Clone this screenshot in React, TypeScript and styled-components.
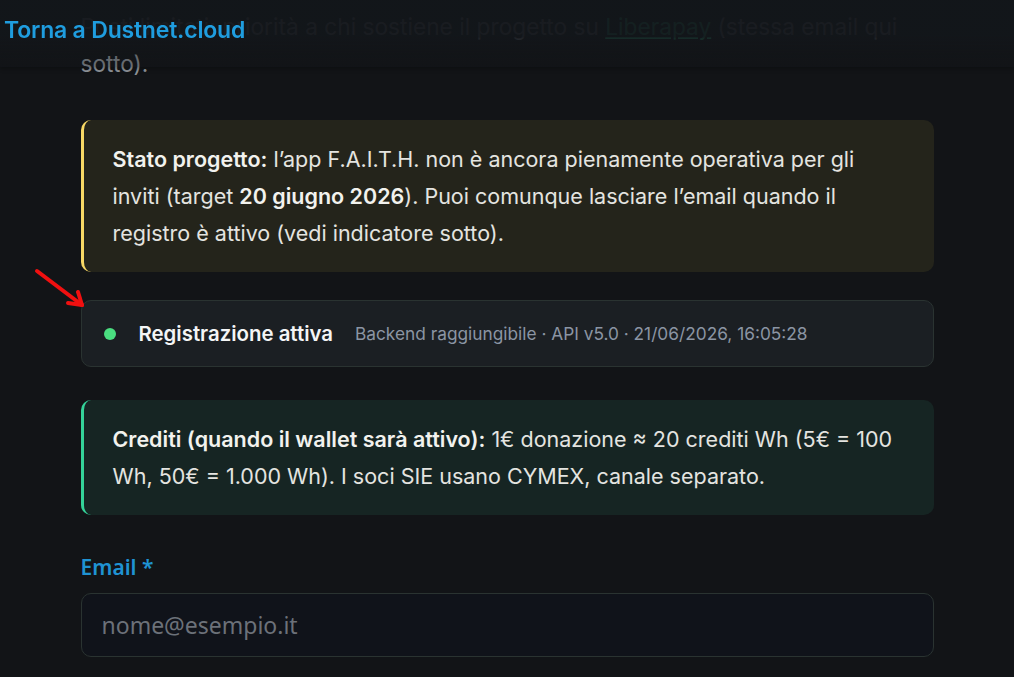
import styled, { createGlobalStyle } from "styled-components";

const GlobalStyle = createGlobalStyle`
  html, body {
    margin: 0;
    padding: 0;
    background: #121417;
    color: #e6e8ea;
    font-family: Inter, "Noto Sans", sans-serif;
  }
  * { box-sizing: border-box; }
`;

const TopBar = styled.header`
  position: fixed;
  top: 0;
  left: 0;
  right: 0;
  height: 67px;
  z-index: 10;
  display: flex;
  align-items: center;
  padding: 0 0 8px 4px;
  background: linear-gradient(
    to bottom,
    rgba(19, 22, 26, 0.95) 0%,
    rgba(19, 22, 26, 0.95) 55%,
    rgba(19, 22, 26, 0.35) 82%,
    rgba(19, 22, 26, 0.3) 100%
  );
  box-shadow: 0 2px 4px rgba(0, 0, 0, 0.25);
`;

const BackLink = styled.a`
  color: #1f9ddf;
  font-size: 23px;
  font-weight: 600;
  letter-spacing: -0.2px;
  text-decoration: none;
`;

const Main = styled.main`
  width: 853px;
  margin: 0 auto;
  padding-top: 8px;
  display: flex;
  flex-direction: column;
`;

const Intro = styled.p`
  margin: 0 0 38px;
  font-size: 22.7px;
  line-height: 37px;
  color: #8d9298;
`;

const Link = styled.a`
  color: #34d399;
  text-decoration: underline;
`;

const Notice = styled.div<{ $accent: string; $bg: string }>`
  background: ${(p) => p.$bg};
  border-left: 3px solid ${(p) => p.$accent};
  border-radius: 10px;
  padding: 21px 32px 20px 29px;
  font-size: 21.5px;
  line-height: 37px;
  color: #e4e4e0;

  b {
    font-weight: 600;
    color: #f2f2ee;
  }
`;

const StatusCard = styled.div`
  margin: 28px 0 33px;
  height: 67px;
  display: flex;
  align-items: center;
  padding: 0 22px;
  background: #1b1f23;
  border: 1px solid #2a3331;
  border-radius: 10px;
`;

const Dot = styled.span`
  width: 12px;
  height: 12px;
  border-radius: 50%;
  background: #4ade80;
  flex: none;
  margin-right: 23px;
`;

const StatusTitle = styled.span`
  font-size: 20.4px;
  font-weight: 600;
  color: #f4f5f6;
  margin-right: 22px;
`;

const StatusMeta = styled.span`
  font-size: 17.3px;
  color: #8b95a3;
`;

const Field = styled.div`
  margin-top: 38px;
  display: flex;
  flex-direction: column;
  gap: 12px;
`;

const Label = styled.label`
  font-family: "Noto Sans", "Open Sans", sans-serif;
  font-size: 21px;
  font-weight: 600;
  color: #1f93d3;
`;

const Input = styled.input`
  height: 64px;
  padding: 0 20px;
  background: #10131a;
  border: 1px solid #2a3331;
  border-radius: 10px;
  font-family: "Noto Sans", "Open Sans", sans-serif;
  font-size: 23px;
  color: #e6e8ea;
  outline: none;

  &::placeholder {
    color: #6c7179;
  }
`;

const Annotation = styled.svg`
  position: absolute;
  left: 30px;
  top: 264px;
  z-index: 5;
  pointer-events: none;
`;

export default function App() {
  return (
    <>
      <GlobalStyle />
      <TopBar>
        <BackLink href="#">Torna a Dustnet.cloud</BackLink>
      </TopBar>
      <Annotation width="60" height="50" viewBox="0 0 60 50">
        <g stroke="#f01010" strokeWidth="4" strokeLinecap="round" fill="none">
          <line x1="7" y1="7" x2="52" y2="41" />
          <line x1="52" y1="41" x2="38" y2="39" />
          <line x1="52" y1="41" x2="48" y2="28" />
        </g>
      </Annotation>
      <Main>
        <Intro>
          Posti limitati: priorità a chi sostiene il progetto su <Link href="#">Liberapay</Link> (stessa email qui
          sotto).
        </Intro>
        <Notice $accent="#f7d865" $bg="#24241b">
          <b>Stato progetto:</b> l’app F.A.I.T.H. non è ancora pienamente operativa per gli inviti (target{" "}
          <b>20 giugno 2026</b>). Puoi comunque lasciare l’email quando il registro è attivo (vedi indicatore
          sotto).
        </Notice>
        <StatusCard>
          <Dot />
          <StatusTitle>Registrazione attiva</StatusTitle>
          <StatusMeta>Backend raggiungibile · API v5.0 · 21/06/2026, 16:05:28</StatusMeta>
        </StatusCard>
        <Notice $accent="#34d399" $bg="#162523">
          <b>Crediti (quando il wallet sarà attivo):</b> 1€ donazione ≈ 20 crediti Wh (5€ = 100 Wh, 50€ = 1.000
          Wh). I soci SIE usano CYMEX, canale separato.
        </Notice>
        <Field>
          <Label htmlFor="email">Email *</Label>
          <Input id="email" type="email" placeholder="nome@esempio.it" />
        </Field>
      </Main>
    </>
  );
}
